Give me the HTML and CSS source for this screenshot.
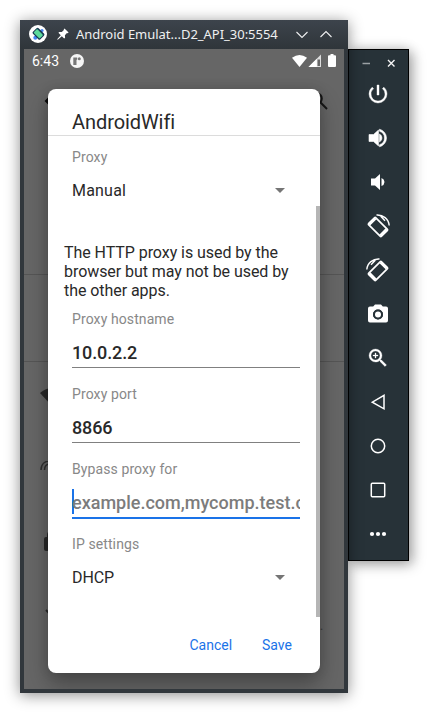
FILE: index.html
```html
<!DOCTYPE html>
<html lang="en">
<head>
<meta charset="utf-8">
<title>Android Emulator</title>
<link rel="stylesheet" href="styles.css">
</head>
<body>
<main class="desktop">
  <section class="window">
    <header class="titlebar">
      <svg class="logo" width="18" height="18" viewBox="0 0 18 18"><circle cx="9" cy="9" r="9" fill="#fff"/><circle cx="6.300" cy="12.700" r="2" fill="#4285f4"/><circle cx="13" cy="5.500" r="1.600" fill="#4285f4"/><rect x="5.700" y="3.500" width="8" height="10.500" rx="1.500" transform="rotate(-45 9.500 9)" fill="#173b53"/><rect x="7" y="4.500" width="5" height="8.500" rx=".8" transform="rotate(-45 9.500 9)" fill="#5cdb9c"/></svg>
      <svg class="pin" width="12" height="12" viewBox="0 0 12 12"><path d="M7.500.4l4.100 4.100-1 .7-.7-.1-2 2.200.2 2.500-.9.8-2.400-2.400L.8 11.800l-.6-.6L3.800 7.200 1.400 4.800l.9-.9 2.500.2L6.900 2 6.800 1.200z" fill="#fff"/></svg>
      <span class="window-title">Android Emulat...D2_API_30:5554</span>
      <svg class="controls" width="36" height="12" viewBox="0 0 36 12" fill="none" stroke="#eff0f1" stroke-width="1.100"><path d="M.5 3l5.500 5.500L11.500 3M24.500 8L30 2.500 35.500 8"/></svg>
    </header>
    <div class="screen">
      <div class="statusbar">
        <span class="clock">6:43</span>
        <svg width="14" height="14" viewBox="0 0 14 14"><circle cx="7" cy="7" r="7" fill="#f5f5f5"/><path d="M3.300 3.500h3.900v2.200H6.500V11H3.300z" fill="#777"/><circle cx="9.300" cy="4.800" r="1.500" fill="#777"/></svg>
        <svg class="signals" width="46" height="14" viewBox="0 0 46 14" fill="#fff"><path d="M0 3.800Q7.500-1.800 15 3.800L7.500 13z"/><path d="M29 .5V13H16.500z" fill="#ddd"/><path d="M25.500 5.500h2.500V12h-2.500z" fill="#666"/><path d="M24.800 4.700V13h-8.300z"/><path d="M38.500 0h3v1.200H43q1 0 1 1V12q0 1-1 1h-6q-1 0-1-1V2.200q0-1 1-1h1.500z"/></svg>
      </div>
      <div class="appbar">
        <svg width="16" height="16" viewBox="0 0 16 16" fill="none" stroke="#080808" stroke-width="2"><path d="M16 8H2M8 2L2 8l6 6"/></svg>
        <svg width="18" height="18" viewBox="0 0 18 18" fill="none" stroke="#151515" stroke-width="2"><circle cx="6.500" cy="6.500" r="5.300"/><path d="M10.300 10.300l6.700 6.700"/></svg>
      </div>
      <div class="block block-first"></div>
      <div class="block block-second"></div>
      <div class="network-list">
        <svg width="24" height="18" viewBox="0 0 24 18" fill="#292929"><path d="M0 5Q12-5 24 5L12 18z"/></svg>
        <svg width="20" height="16" viewBox="0 0 20 16" fill="none" stroke="#303030" stroke-width="1.500"><path d="M1 9C1 3 5 0 10 0s9 3 9 9M4.500 9c0-4 2-6 5.500-6"/></svg>
        <svg width="16" height="20" viewBox="0 0 16 20"><rect y="6" width="16" height="14" rx="2" fill="#292929"/><path d="M4 7V4a4 4 0 018 0v3" fill="none" stroke="#292929" stroke-width="2"/></svg>
        <svg width="12" height="8" viewBox="0 0 12 8" fill="none" stroke="#292929" stroke-width="2"><path d="M1 1l5 5 5-5"/></svg>
      </div>
      <span class="ellipsis">..</span>
      <div class="dialog">
        <h1 class="dialog-title">AndroidWifi</h1>
        <div class="dialog-body">
          <div class="label">Proxy</div>
          <div class="select">Manual<i class="caret"></i></div>
          <p class="notice">The HTTP proxy is used by the<br>browser but may not be used by<br>the other apps.</p>
          <div class="label">Proxy hostname</div>
          <div class="input">10.0.2.2</div>
          <div class="label">Proxy port</div>
          <div class="input">8866</div>
          <div class="label">Bypass proxy for</div>
          <div class="input focused">example.com,mycomp.test.com</div>
          <div class="label">IP settings</div>
          <div class="select dhcp">DHCP<i class="caret"></i></div>
          <div class="scrollbar"></div>
        </div>
        <div class="actions"><span class="cancel">Cancel</span><span class="save">Save</span></div>
      </div>
    </div>
  </section>
  <aside class="toolbar">
    <div class="toolbar-controls">
      <svg width="34" height="10" viewBox="0 0 34 10" fill="none"><path d="M1.500 4.500h7.500" stroke="#9ba1a4" stroke-width="1.500"/><path d="M27 1l6.500 6.500m0-6.500L27 7.500" stroke="#f5f5f5" stroke-width="1.400"/></svg>
    </div>
    <div class="tool"><svg viewBox="0 0 24 24"><path d="M13 3h-2v10h2V3zm4.830 2.170l-1.420 1.420A6.920 6.920 0 0119 12c0 3.870-3.130 7-7 7A6.995 6.995 0 017.580 6.580L6.170 5.170A8.932 8.932 0 003 12a9 9 0 0018 0c0-2.740-1.230-5.180-3.170-6.830z" stroke="#fff" stroke-width=".4"/></svg></div>
    <div class="tool"><svg viewBox="0 0 24 24"><path d="M3 8.500v7h4.500l5 4.500V4l-5 4.500H3zm10.500-.5v8A4.500 4.500 0 0016 12a4.500 4.500 0 00-2.500-4zM13.500 3.230v2.060a7 7 0 010 13.420v2.060a9 9 0 000-17.540z" stroke="#fff" stroke-width=".6"/></svg></div>
    <div class="tool"><svg viewBox="0 0 24 24"><path d="M5 8.500v7h4l5 4.500V4L9 8.500H5zm10.500-.5v8A4.500 4.500 0 0018.500 12a4.500 4.500 0 00-3-4z"/></svg></div>
    <div class="tool"><svg viewBox="0 0 24 24"><g fill="none" stroke="#fff"><g transform="rotate(-45 12 13)"><rect x="7" y="4" width="10" height="18" rx="1" stroke-width="1.700"/><path d="M7.500 5h9M7.500 20.700h9" stroke-width="2.800"/></g><path d="M10.500 1C17 .5 22.700 5 23.200 11.500M14.500 2l4.500 4.800" stroke-width="1.400"/></g></svg></div>
    <div class="tool"><svg class="flip" viewBox="0 0 24 24"><g fill="none" stroke="#fff"><g transform="rotate(-45 12 13)"><rect x="7" y="4" width="10" height="18" rx="1" stroke-width="1.700"/><path d="M7.500 5h9M7.500 20.700h9" stroke-width="2.800"/></g><path d="M10.500 1C17 .5 22.700 5 23.200 11.500M14.500 2l4.500 4.800" stroke-width="1.400"/></g></svg></div>
    <div class="tool"><svg viewBox="0 0 24 24"><path fill-rule="evenodd" d="M9 2.500L7.200 4.500H4a2 2 0 00-2 2v12a2 2 0 002 2h16a2 2 0 002-2v-12a2 2 0 00-2-2h-3.200L15 2.500H9zm3 5a5 5 0 110 10 5 5 0 010-10zm0 1.800a3.200 3.200 0 100 6.400 3.200 3.200 0 000-6.400z"/><circle cx="12" cy="12.500" r="4.100" fill="#273238" stroke="#273238" stroke-width="1.800"/><circle cx="12" cy="12.500" r="3.200" fill="#273238"/><circle cx="12" cy="12.500" r="3" fill="#fff"/></svg></div>
    <div class="tool"><svg viewBox="0 0 24 24"><path d="M15.500 14h-.790l-.280-.270A6.471 6.471 0 0016 9.500 6.500 6.500 0 109.500 16c1.610 0 3.090-.590 4.230-1.570l.270.280v.790l5 4.990L20.490 19l-4.990-5zm-6 0a4.500 4.500 0 110-9 4.500 4.500 0 010 9zM12 9h-2V7H9v2H7v1h2v2h1v-2h2z" stroke="#fff" stroke-width=".3"/></svg></div>
    <div class="tool"><svg viewBox="0 0 24 24"><path d="M18 5.300v13.500L6.300 12.200z" fill="none" stroke="#fff" stroke-width="1.500"/></svg></div>
    <div class="tool"><svg viewBox="0 0 24 24"><circle cx="12" cy="12" r="6.700" fill="none" stroke="#fff" stroke-width="1.500"/></svg></div>
    <div class="tool"><svg viewBox="0 0 24 24"><rect x="5.300" y="5.300" width="13.400" height="13.400" rx="1" fill="none" stroke="#fff" stroke-width="1.500"/></svg></div>
    <div class="tool"><svg viewBox="0 0 24 24"><circle cx="6" cy="12" r="2.100"/><circle cx="12" cy="12" r="2.100"/><circle cx="18" cy="12" r="2.100"/></svg></div>
  </aside>
</main>
</body>
</html>
```
FILE: styles.css
```css
* { box-sizing: border-box; }
body { margin: 0; background: #fff; font-family: Roboto, sans-serif; overflow: hidden; }
svg { display: block; flex: none; }
.desktop { display: flex; align-items: flex-start; height: 713px; padding: 20px; }
.window { width: 328px; height: 673px; flex: none; padding: 0 4px 4px; background: #31373c; box-shadow: 0 2px 14px rgba(0,0,0,.45); position: relative; }
.titlebar { height: 29px; margin: 0 -4px; padding: 0 16px 0 9px; display: flex; align-items: center; background: linear-gradient(#3d444c, #2f353a); }
.logo { margin-top: -1px; }
.pin { margin: -2px 0 0 10px; }
.window-title { margin: -2px 0 0 7px; font: 13px/20px "Noto Sans", sans-serif; letter-spacing: -.02px; color: #eff0f1; white-space: nowrap; }
.controls { margin-left: auto; }
.screen { position: relative; height: 640px; overflow: hidden; background: #666; }
.statusbar { height: 24px; padding: 0 6px 0 8px; display: flex; align-items: center; color: #fff; }
.clock { width: 38px; font-size: 14px; line-height: 24px; letter-spacing: 0; }
.signals { margin: -1px 0 0 auto; }
.appbar { height: 56px; padding: 0 16px 0 20px; display: flex; align-items: center; justify-content: space-between; }
.block { border-bottom: 1px solid #555; }
.block-first { height: 146px; }
.block-second { height: 87px; }
.network-list { padding: 26px 16px; display: grid; grid-auto-rows: 18px; align-items: center; row-gap: 54px; }
.network-list svg:nth-child(3) { margin-left: 4px; }
.network-list svg:nth-child(4) { margin-left: 5px; }
.ellipsis { position: absolute; left: 292px; top: 567px; font-size: 14px; line-height: 18px; color: #404040; }
.dialog { position: absolute; left: 24px; top: 40px; width: 272px; height: 584px; display: flex; flex-direction: column; border-radius: 8px; background: #fff; box-shadow: 0 12px 22px rgba(0,0,0,.3), 0 0 12px rgba(0,0,0,.12); color: #292929; }
.dialog-title { margin: 0; height: 47px; padding: 20px 24px 0; border-bottom: 1px solid #dcdcdc; font-size: 20px; line-height: 26px; font-weight: 400; letter-spacing: -.08px; }
.dialog-body { position: relative; height: 481px; padding: 11px 20px 0 24px; }
.label { height: 20px; font-size: 14px; line-height: 20px; letter-spacing: .1px; color: #888; }
.select { height: 47px; padding-right: 15px; display: flex; align-items: center; justify-content: space-between; font-size: 16px; letter-spacing: .2px; }
.select.dhcp { letter-spacing: -.1px; }
.caret { border: solid transparent; border-width: 5px 5px 0; border-top-color: #757575; }
.notice { margin: 29px -12px 9px -8px; font-size: 16px; line-height: 19px; letter-spacing: -.06px; white-space: nowrap; }
.input { width: 228px; height: 39px; margin-bottom: 16px; border-bottom: 1px solid #808080; font-size: 18px; line-height: 48px; font-weight: 500; letter-spacing: -.12px; overflow: hidden; white-space: nowrap; }
.input.focused { height: 40px; margin-bottom: 15px; border-bottom: 2px solid #1a73e8; letter-spacing: 0; color: #7c7c7c; background: linear-gradient(#1a73e8, #1a73e8) 0 10px / 2px 25px no-repeat; }
.scrollbar { position: absolute; right: 0; top: 70px; width: 4px; height: 411px; background: #b5b5b5; }
.actions { height: 56px; padding: 0 28px; display: flex; align-items: center; justify-content: flex-end; gap: 30px; color: #1a73e8; font-size: 14px; letter-spacing: 0; }
.toolbar { width: 61px; height: 512px; margin-top: 29px; flex: none; border: 1px solid #000; background: #273238; box-shadow: 4px 4px 12px rgba(0,0,0,.28), 0 0 12px rgba(0,0,0,.2); }
.toolbar-controls { height: 22px; padding: 9px 0 0 12px; }
.tool { height: 44px; padding-right: 1px; display: flex; align-items: center; justify-content: center; }
.tool svg { width: 24px; height: 24px; fill: #fff; }
.flip { transform: scaleX(-1); }
```
